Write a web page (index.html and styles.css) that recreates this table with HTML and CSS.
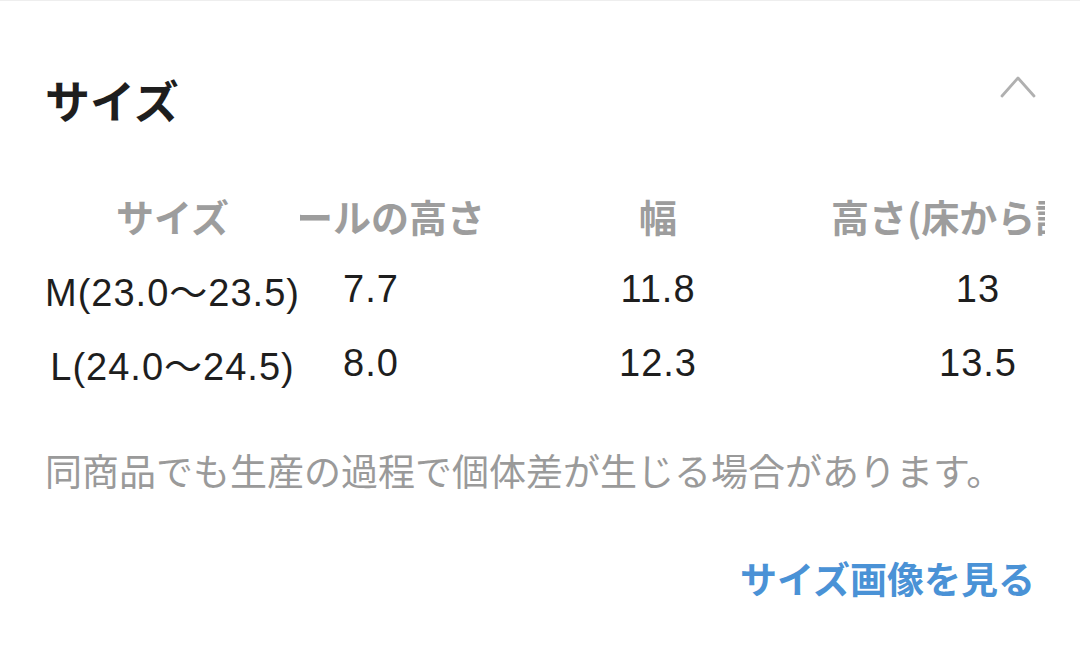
FILE: index.html
```html
<!DOCTYPE html>
<html lang="ja">
<head>
<meta charset="utf-8">
<title>サイズ</title>
<link rel="stylesheet" href="styles.css">
</head>
<body>
<section class="panel">
  <div class="panel-head">
    <h2 class="panel-title">サイズ</h2>
    <button class="toggle" type="button" aria-label="閉じる">
      <svg width="38" height="26" viewBox="0 0 38 26" aria-hidden="true"><polyline points="3,22 19,4 35,22" fill="none" stroke="#b0b0b0" stroke-width="2.8" stroke-linecap="round" stroke-linejoin="round"/></svg>
    </button>
  </div>
  <div class="table-scroll" id="sizeTable">
    <table class="size-table">
      <colgroup><col class="c1"><col class="c2"><col class="c3"><col class="c4"></colgroup>
      <thead>
        <tr><th class="sticky">サイズ</th><th>ヒールの高さ</th><th>幅</th><th>高さ(床から計測)</th></tr>
      </thead>
      <tbody>
        <tr><td class="sticky">M(23.0～23.5)</td><td>7.7</td><td>11.8</td><td>13</td></tr>
        <tr><td class="sticky">L(24.0～24.5)</td><td>8.0</td><td>12.3</td><td>13.5</td></tr>
      </tbody>
    </table>
  </div>
  <p class="note">同商品でも生産の過程で個体差が生じる場合があります。</p>
  <div class="link-row"><a class="link" href="#">サイズ画像を見る</a></div>
</section>
<script src="script.js"></script>
</body>
</html>
```

FILE: styles.css
```css
html, body {
  margin: 0;
  padding: 0;
  background: #fff;
}
body {
  border-top: 1px solid #eeeeee;
  font-family: "Noto Sans CJK JP", sans-serif;
  color: #222;
}
.panel {
  padding: 67px 45px 0 45px;
}
.panel-head {
  display: flex;
  align-items: center;
  justify-content: space-between;
  height: 64px;
}
.panel-title {
  margin: 0;
  font-size: 45px;
  font-weight: 700;
  line-height: 64px;
  color: #1e1e1e;
}
.toggle {
  align-self: flex-start;
  border: 0;
  background: none;
  padding: 0;
  margin: 6px -2px 0 0;
  display: flex;
  height: 26px;
}
.table-scroll {
  margin-top: 46px;
  margin-right: -10px;
  overflow-x: hidden;
}
.size-table {
  border-collapse: collapse;
  table-layout: fixed;
  width: 1123px;
}
.c1 { width: 255px; }
.c2 { width: 228px; }
.c3 { width: 346px; }
.c4 { width: 294px; }
.size-table th,
.size-table td {
  padding: 0;
  height: 74px;
  text-align: center;
  white-space: nowrap;
  vertical-align: middle;
}
.size-table th {
  font-size: 38px;
  font-weight: 700;
  color: #9d9d9d;
}
.size-table td {
  font-family: "Liberation Sans", "Noto Sans CJK JP", sans-serif;
  font-size: 38px;
  letter-spacing: 1px;
  color: #1e1e1e;
}
.sticky {
  position: sticky;
  left: 0;
  z-index: 1;
  background: #fff;
}
.note {
  margin: 44px 0 0 0;
  font-size: 37px;
  line-height: 52px;
  color: #9a9a9a;
  white-space: nowrap;
}
.link-row {
  display: flex;
  justify-content: flex-end;
  margin-top: 56px;
}
.link {
  font-size: 37px;
  line-height: 52px;
  font-weight: 700;
  color: #4a92d6;
  text-decoration: none;
}
```

FILE: script.js
```js
document.getElementById('sizeTable').scrollLeft = 43;
```
